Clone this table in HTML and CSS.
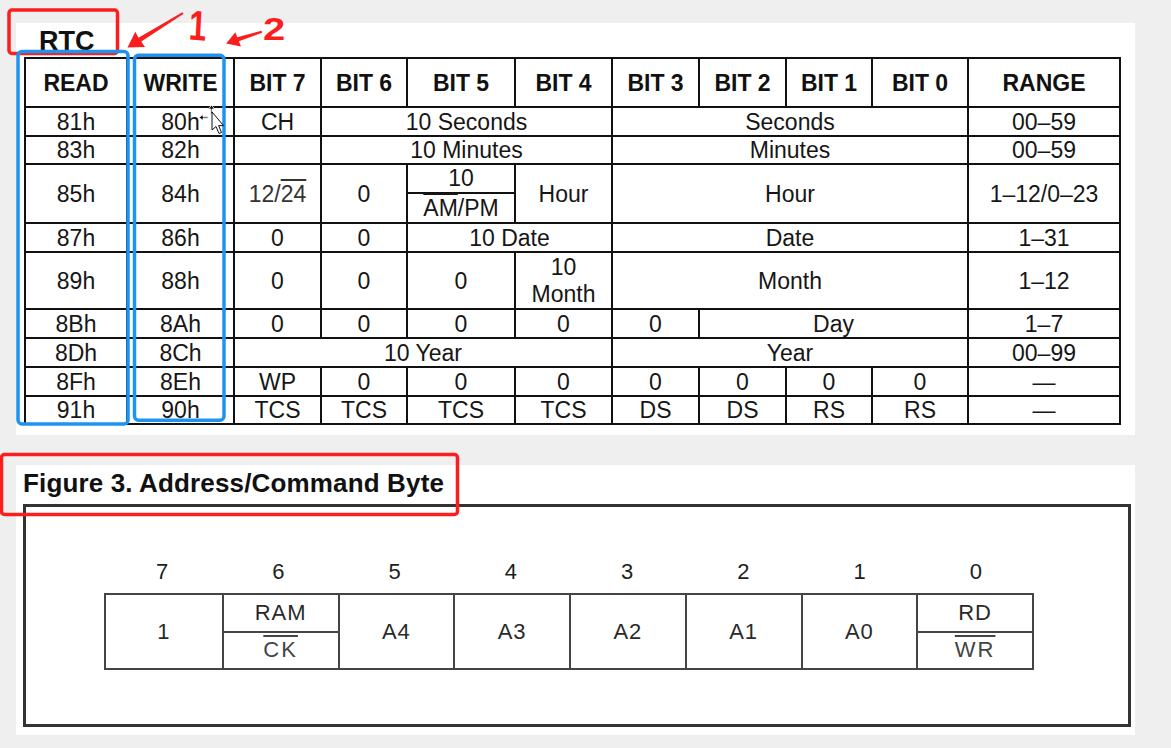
FILE: index.html
```html
<!DOCTYPE html>
<html lang="en">
<head>
<meta charset="utf-8">
<title>RTC registers</title>
<link rel="stylesheet" href="styles.css">
</head>
<body>
<div class="page">
  <section class="panel panel-rtc">
    <h2 class="rtc-title">RTC</h2>
    <table class="reg">
      <colgroup>
        <col class="c-read"><col class="c-write"><col class="c-b7"><col class="c-b6"><col class="c-b5"><col class="c-b4"><col class="c-b3"><col class="c-b2"><col class="c-b1"><col class="c-b0"><col class="c-range">
      </colgroup>
      <tr class="r-head">
        <th>READ</th><th>WRITE</th><th>BIT 7</th><th>BIT 6</th><th>BIT 5</th><th>BIT 4</th><th>BIT 3</th><th>BIT 2</th><th>BIT 1</th><th>BIT 0</th><th>RANGE</th>
      </tr>
      <tr class="r29">
        <td>81h</td><td>80h</td><td>CH</td><td colspan="3">10 Seconds</td><td colspan="4">Seconds</td><td>00–59</td>
      </tr>
      <tr class="r28">
        <td>83h</td><td>82h</td><td></td><td colspan="3">10 Minutes</td><td colspan="4">Minutes</td><td>00–59</td>
      </tr>
      <tr class="r59">
        <td>85h</td><td>84h</td><td class="thin">12/<span class="ovl">24</span></td><td>0</td>
        <td class="splitcell"><div class="split"><div class="split-top">10</div><div class="split-bot"><span class="ovl">AM</span>/PM</div></div></td>
        <td>Hour</td><td colspan="4">Hour</td><td>1–12/0–23</td>
      </tr>
      <tr class="r29">
        <td>87h</td><td>86h</td><td>0</td><td>0</td><td colspan="2">10 Date</td><td colspan="4">Date</td><td>1–31</td>
      </tr>
      <tr class="r57">
        <td>89h</td><td>88h</td><td>0</td><td>0</td><td>0</td><td class="twoline">10<br>Month</td><td colspan="4">Month</td><td>1–12</td>
      </tr>
      <tr class="r29">
        <td>8Bh</td><td>8Ah</td><td>0</td><td>0</td><td>0</td><td>0</td><td>0</td><td colspan="3">Day</td><td>1–7</td>
      </tr>
      <tr class="r29">
        <td>8Dh</td><td>8Ch</td><td colspan="4">10 Year</td><td colspan="4">Year</td><td>00–99</td>
      </tr>
      <tr class="r29">
        <td>8Fh</td><td>8Eh</td><td>WP</td><td>0</td><td>0</td><td>0</td><td>0</td><td>0</td><td>0</td><td>0</td><td>—</td>
      </tr>
      <tr class="r28">
        <td>91h</td><td>90h</td><td>TCS</td><td>TCS</td><td>TCS</td><td>TCS</td><td>DS</td><td>DS</td><td>RS</td><td>RS</td><td>—</td>
      </tr>
    </table>
  </section>

  <section class="panel panel-fig">
    <h2 class="fig-title">Figure 3. Address/Command Byte</h2>
    <div class="fig-box">
      <div class="byte">
        <div class="bit-nums">
          <span>7</span><span>6</span><span>5</span><span>4</span><span>3</span><span>2</span><span>1</span><span>0</span>
        </div>
        <div class="bit-cells">
          <div class="bcell">1</div>
          <div class="bcell bsplit"><div class="bhalf">RAM</div><div class="bhalf bhalf-bot"><span class="ovl2">CK</span></div></div>
          <div class="bcell">A4</div>
          <div class="bcell">A3</div>
          <div class="bcell">A2</div>
          <div class="bcell">A1</div>
          <div class="bcell">A0</div>
          <div class="bcell bsplit"><div class="bhalf">RD</div><div class="bhalf bhalf-bot"><span class="ovl2">WR</span></div></div>
        </div>
      </div>
    </div>
  </section>

  <div class="annot">
    <svg class="annot-svg" width="1171" height="748" viewBox="0 0 1171 748">
      <rect x="9" y="10" width="108.5" height="43.5" rx="3" class="red-box"/>
      <rect x="1.5" y="454.5" width="456" height="60" rx="3" class="red-box"/>
      <rect x="18" y="51.5" width="110" height="372.5" rx="4" class="blue-box"/>
      <rect x="134.5" y="55.3" width="89.5" height="365" rx="4" class="blue-box"/>
      <polygon class="red-fill" points="127.5,47.5 145,47 141.3,41.6 183.6,13.8 182.4,12.2 138.5,37.7 135.3,31.8"/>
      <polygon class="red-fill" points="226.2,43.6 241,46.4 238.9,41.3 262.2,32.8 261.4,30.8 237.2,37.3 235.4,32.2"/>
      <g class="cursor">
        <path d="M211.5 105 L208.5 109 L210.8 109 L210.8 114 L212.2 114 L212.2 109 L214.5 109 Z" />
        <path d="M199 117.5 L203 114.5 L203 116.8 L208 116.8 L208 118.2 L203 118.2 L203 120.5 Z" />
        <path class="ptr" d="M212 112 L212 130 L216 126.5 L219 133.5 L221.5 132.5 L218.6 125.6 L223.5 125.6 Z"/>
      </g>
    </svg>
    <span class="hand hand-1">1</span>
    <span class="hand hand-2">2</span>
  </div>
</div>
</body>
</html>
```

FILE: styles.css
```css
html, body {
  margin: 0;
  padding: 0;
}

body {
  background: #efefef;
  font-family: "Liberation Sans", Arial, sans-serif;
  color: #141414;
}

.page {
  position: relative;
  width: 1171px;
  height: 748px;
  padding: 23px 0 0 16px;
  box-sizing: border-box;
  overflow: hidden;
}

.panel {
  background: #ffffff;
  width: 1119px;
  box-sizing: border-box;
}

.panel-rtc {
  height: 412px;
  padding: 5px 0 0 8px;
}

.rtc-title {
  margin: 0 0 2px 15px;
  font-size: 27px;
  line-height: 27px;
  font-weight: bold;
  color: #111;
}

/* register table */
.reg {
  border-collapse: collapse;
  table-layout: fixed;
  width: 1096px;
  font-size: 23px;
  line-height: 24px;
  color: #161616;
}

.reg th,
.reg td {
  border: 2px solid #111;
  padding: 0;
  text-align: center;
  vertical-align: middle;
  white-space: nowrap;
}

.reg th {
  font-weight: bold;
  color: #111;
}

.c-read { width: 102px; }
.c-write { width: 107px; }
.c-b7 { width: 87px; }
.c-b6 { width: 86px; }
.c-b5 { width: 108px; }
.c-b4 { width: 97px; }
.c-b3 { width: 87px; }
.c-b2 { width: 87px; }
.c-b1 { width: 86px; }
.c-b0 { width: 96px; }
.c-range { width: 152px; }

.r-head { height: 49px; }
.r29 { height: 29px; }
.r28 { height: 28px; }
.r59 { height: 59px; }
.r57 { height: 57px; }

.thin {
  color: #333;
}

.ovl {
  text-decoration: overline;
  text-decoration-thickness: 1.5px;
}

.splitcell {
  padding: 0;
}

.split {
  display: flex;
  flex-direction: column;
  height: 57px;
}

.split-top {
  height: 27px;
  line-height: 26px;
}

.split-bot {
  flex: 1;
  border-top: 2px solid #111;
  line-height: 28px;
}

.twoline {
  line-height: 27px;
}

/* figure panel */
.panel-fig {
  margin-top: 30px;
  height: 270px;
  padding: 6px 0 0 7px;
}

.fig-title {
  margin: 0 0 8px 0;
  font-size: 26px;
  line-height: 25px;
  font-weight: bold;
  color: #111;
  letter-spacing: 0.15px;
}

.fig-box {
  width: 1108px;
  height: 223px;
  border: 3px solid #333;
  box-sizing: border-box;
  padding: 54px 0 0 78px;
}

.byte {
  width: 930px;
  display: flex;
  flex-direction: column;
  gap: 10px;
}

.bit-nums {
  display: grid;
  grid-template-columns: repeat(8, 1fr);
  font-size: 22px;
  line-height: 22px;
  color: #1e1e1e;
  text-align: center;
}

.bit-cells {
  display: grid;
  grid-template-columns: repeat(8, 1fr);
  height: 77px;
  border: 2px solid #444;
  box-sizing: border-box;
  font-size: 22px;
  letter-spacing: 1px;
  color: #2a2a2a;
}

.bcell {
  display: flex;
  align-items: center;
  justify-content: center;
  border-left: 2px solid #444;
}

.bcell:first-child {
  border-left: none;
}

.bsplit {
  flex-direction: column;
  align-items: stretch;
}

.bhalf {
  flex: 1;
  display: flex;
  align-items: center;
  justify-content: center;
}

.bhalf-bot {
  border-top: 2px solid #444;
}

.ovl2 {
  text-decoration: overline;
  text-decoration-thickness: 1.5px;
  color: #444;
  letter-spacing: 2px;
}

/* annotations */
.annot {
  position: absolute;
  left: 0;
  top: 0;
  width: 1171px;
  height: 748px;
  pointer-events: none;
}

.annot-svg {
  position: absolute;
  left: 0;
  top: 0;
}

.red-box {
  fill: none;
  stroke: #fa1e1e;
  stroke-width: 3.5;
}

.blue-box {
  fill: none;
  stroke: #1e93f0;
  stroke-width: 3.5;
}

.red-fill {
  fill: #fa1e1e;
}

.cursor path {
  fill: #111;
  stroke: #fff;
  stroke-width: 0.8;
}

.cursor .ptr {
  fill: #fff;
  stroke: #111;
  stroke-width: 1;
}

.hand {
  position: absolute;
  color: #fa1e1e;
  font-family: "Liberation Sans", sans-serif;
  font-weight: bold;
  line-height: 1;
}

.hand-1 {
  left: 186px;
  top: 5px;
  font-size: 42px;
  transform: scaleX(0.75) rotate(4deg);
}

.hand-2 {
  left: 263px;
  top: 13px;
  font-size: 32px;
  transform: scaleX(1.25);
  transform-origin: left center;
}
```
